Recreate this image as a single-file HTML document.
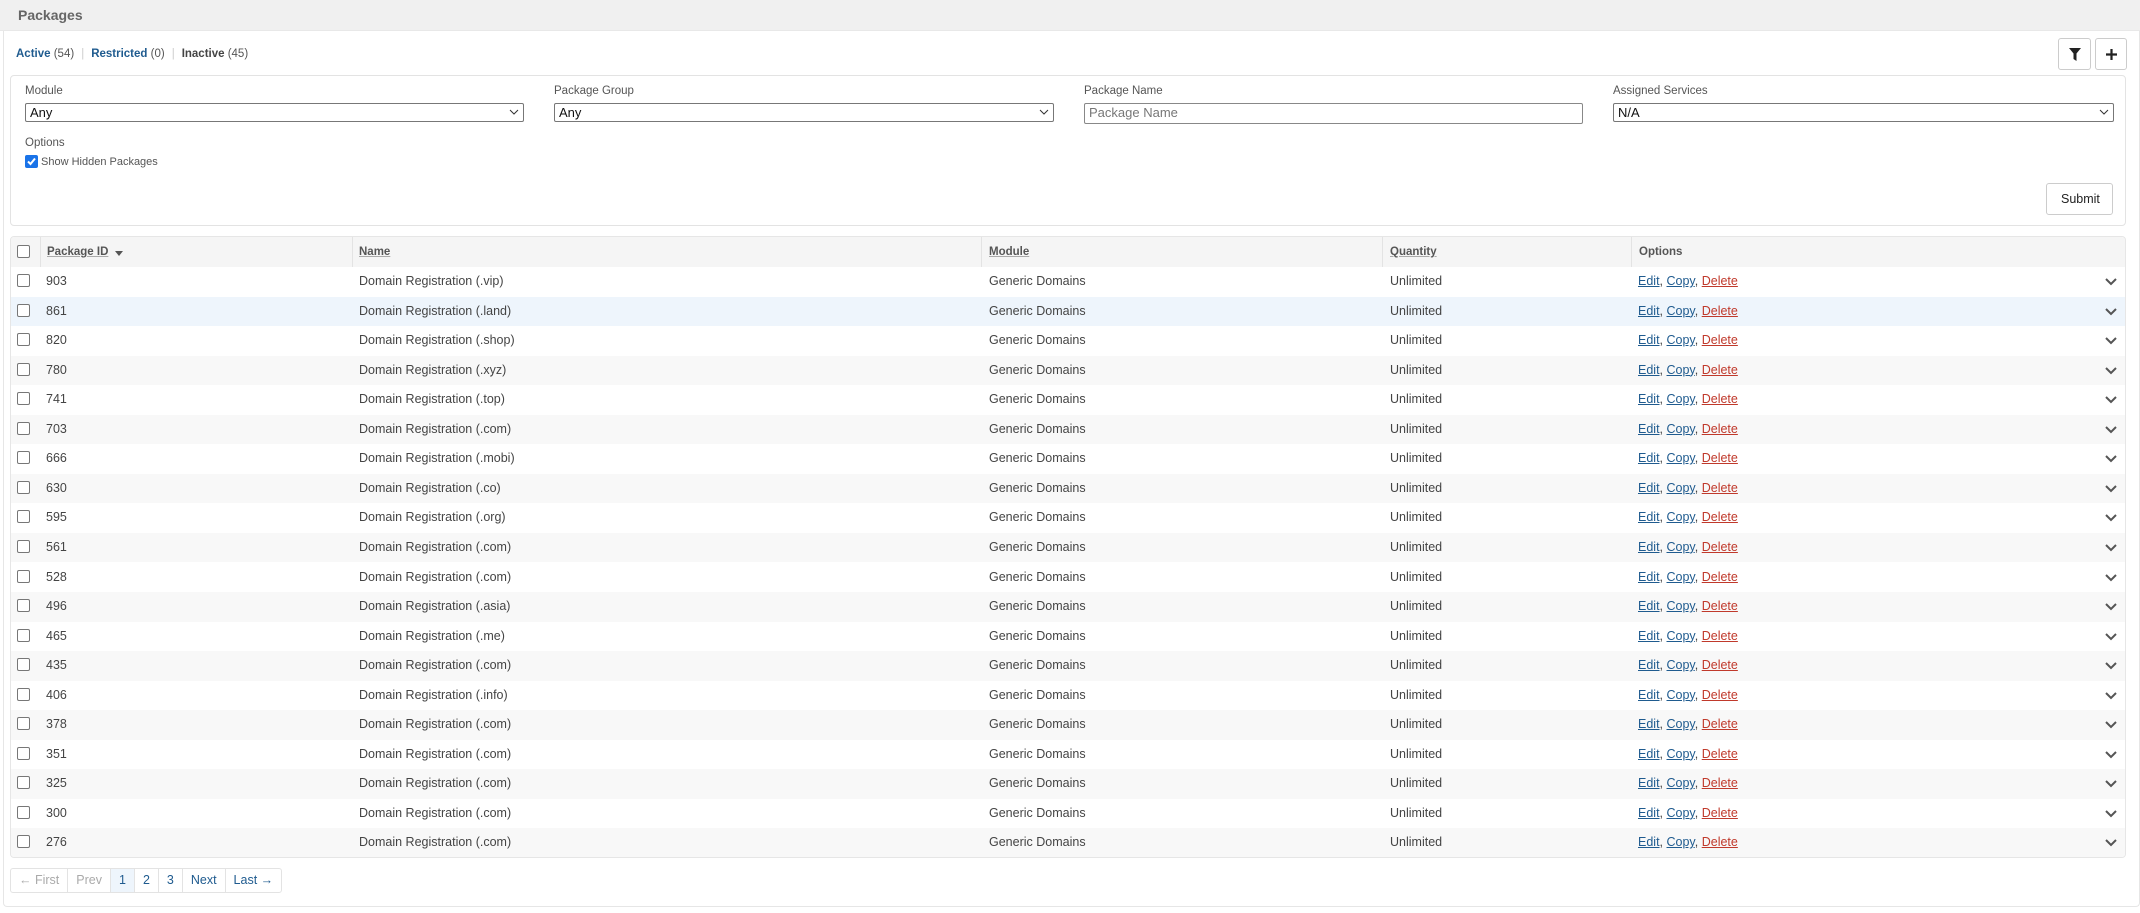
<!DOCTYPE html>
<html><head><meta charset="utf-8"><style>
*{box-sizing:border-box;margin:0;padding:0}
body{width:2140px;height:913px;background:#fff;font-family:"Liberation Sans",sans-serif;color:#444;position:relative;overflow:hidden;font-size:13px}
.a{position:absolute}
.outer{left:3px;top:0;width:2137px;height:907px;border:1px solid #e6e6e6;border-top:none;border-radius:0 0 4px 4px}
.hdr{left:0;top:0;width:2140px;height:31px;background:#f0f0f0;border-bottom:1px solid #e8e8e8}
.hdr span{position:absolute;left:18px;top:7px;font-size:14px;font-weight:bold;color:#666}
.tabs{left:16px;top:48px;font-size:11.5px;color:#555}
.tabs b{color:#1f5b8f}
.tabs .sep{color:#ccc;margin:0 7px}
.btn{border:1px solid #ccc;border-radius:3px;background:#fff;color:#222}
.fbox{left:10px;top:75px;width:2116px;height:151px;border:1px solid #e3e3e3;border-radius:4px}
.lbl{font-size:11.5px;color:#555}
.sel{height:19px;border:1px solid #777;border-radius:2px;font-size:13px;color:#111;padding:1px 4px;background:#fff}
.sel svg{position:absolute;right:4px;top:5px}
.tbl{left:10px;top:236px;width:2116px;height:622px;border:1px solid #e6e6e6;border-radius:4px;overflow:hidden}
.row{position:absolute;left:0;width:2116px;height:29.55px}
.c{position:absolute;top:7px;font-size:12.5px;color:#444;white-space:nowrap}
.th{font-size:11.5px;font-weight:bold;color:#555;text-decoration:underline;text-decoration-color:#aaa}
.cb{position:absolute;left:6px;width:13px;height:13px;border:1px solid #777;border-radius:2px;background:#fff}
.l{color:#1f5b8f;text-decoration:underline}
.d{color:#c0392b;text-decoration:underline}
.pg{top:868px;left:10px;height:25px;border:1px solid #e3e3e3;border-radius:3px;display:flex;font-size:12.5px}
.pg div{padding:4px 8px;border-right:1px solid #e3e3e3;color:#1f5b8f}
</style></head><body>
<div class="a outer"></div>
<div class="a hdr"><span>Packages</span></div>
<div class="a tabs"><b>Active</b> (54)<span class="sep">|</span><b>Restricted</b> (0)<span class="sep">|</span><b style="color:#444">Inactive</b> (45)</div>
<div class="a btn" style="left:2058px;top:38px;width:33px;height:32px"><svg class="a" style="left:10px;top:9px" width="12" height="13" viewBox="0 0 12 13"><path d="M0 0H12L7.5 5.5V13L4.5 11V5.5Z" fill="#222"/></svg></div>
<div class="a btn" style="left:2095px;top:38px;width:32px;height:32px"><svg class="a" style="left:9px;top:9px" width="13" height="13"><path d="M6.5 1V12M1 6.5H12" stroke="#222" stroke-width="2.2"/></svg></div>
<div class="a fbox"></div>
<div class="a lbl" style="left:25px;top:85px">Module</div>
<div class="a lbl" style="left:554px;top:85px">Package Group</div>
<div class="a lbl" style="left:1084px;top:85px">Package Name</div>
<div class="a lbl" style="left:1613px;top:85px">Assigned Services</div>
<div class="a sel" style="left:25px;top:103px;width:499px">Any<svg width="10" height="7"><path d="M1 1L5 5L9 1" stroke="#333" fill="none"/></svg></div>
<div class="a sel" style="left:554px;top:103px;width:500px">Any<svg width="10" height="7"><path d="M1 1L5 5L9 1" stroke="#333" fill="none"/></svg></div>
<div class="a sel" style="left:1084px;top:103px;width:499px;height:21px;color:#777;border-color:#888">Package Name</div>
<div class="a sel" style="left:1613px;top:103px;width:501px">N/A<svg width="10" height="7"><path d="M1 1L5 5L9 1" stroke="#333" fill="none"/></svg></div>
<div class="a lbl" style="left:25px;top:137px">Options</div>
<div class="a" style="left:25px;top:155px;width:13px;height:13px;background:#1a73e8;border-radius:2px"><svg width="13" height="13"><path d="M3 6.5L5.5 9L10 3.5" stroke="#fff" stroke-width="2" fill="none"/></svg></div>
<div class="a lbl" style="left:41px;top:156px;font-size:11px">Show Hidden Packages</div>
<div class="a btn" style="left:2046px;top:183px;width:67px;height:32px;font-size:12.5px;padding:8px 0 0 14px">Submit</div>
<div class="a tbl">
<div class="row" style="top:0;height:30px;background:#f5f5f5">
<div class="cb" style="top:8px"></div>
<div class="a" style="left:29px;top:0;width:1px;height:30px;background:#e3e3e3"></div>
<div class="a" style="left:341px;top:0;width:1px;height:30px;background:#e3e3e3"></div>
<div class="a" style="left:970px;top:0;width:1px;height:30px;background:#e3e3e3"></div>
<div class="a" style="left:1371px;top:0;width:1px;height:30px;background:#e3e3e3"></div>
<div class="a" style="left:1620px;top:0;width:1px;height:30px;background:#e3e3e3"></div>
<div class="c th" style="left:36px;top:9px">Package ID</div><svg class="a" style="left:104px;top:14px" width="8" height="5"><path d="M0 0H8L4 5Z" fill="#555"/></svg>
<div class="c th" style="left:348px;top:9px">Name</div>
<div class="c th" style="left:978px;top:9px">Module</div>
<div class="c th" style="left:1379px;top:9px">Quantity</div>
<div class="c th" style="left:1628px;top:9px;text-decoration:none">Options</div>
</div>
</div>
<div class="a pg"><div style="color:#aaa">← First</div><div style="color:#aaa">Prev</div><div style="background:#eef5fc">1</div><div>2</div><div>3</div><div>Next</div><div style="border:none">Last →</div></div>
<script>
var ids=[["903","vip"],["861","land"],["820","shop"],["780","xyz"],["741","top"],["703","com"],["666","mobi"],["630","co"],["595","org"],["561","com"],["528","com"],["496","asia"],["465","me"],["435","com"],["406","info"],["378","com"],["351","com"],["325","com"],["300","com"],["276","com"]];
var t=document.querySelector('.tbl'),h='';
ids.forEach(function(r,i){var bg=i==1?'#eef5fc':(i%2?'#f8f8f8':'#fff');
h+='<div class="row" style="top:'+(30+i*29.55)+'px;background:'+bg+'"><div class="cb" style="top:7px"></div>'+
'<div class="c" style="left:35px">'+r[0]+'</div><div class="c" style="left:348px">Domain Registration (.'+r[1]+')</div>'+
'<div class="c" style="left:978px">Generic Domains</div><div class="c" style="left:1379px">Unlimited</div>'+
'<div class="c" style="left:1627px"><span class="l">Edit</span>, <span class="l">Copy</span>, <span class="d">Delete</span></div>'+
'<svg class="a" style="left:2094px;top:11px" width="12" height="8"><path d="M1 1L6 6L11 1" stroke="#555" stroke-width="2" fill="none"/></svg></div>';});
t.insertAdjacentHTML('beforeend',h);
</script>
</body></html>
